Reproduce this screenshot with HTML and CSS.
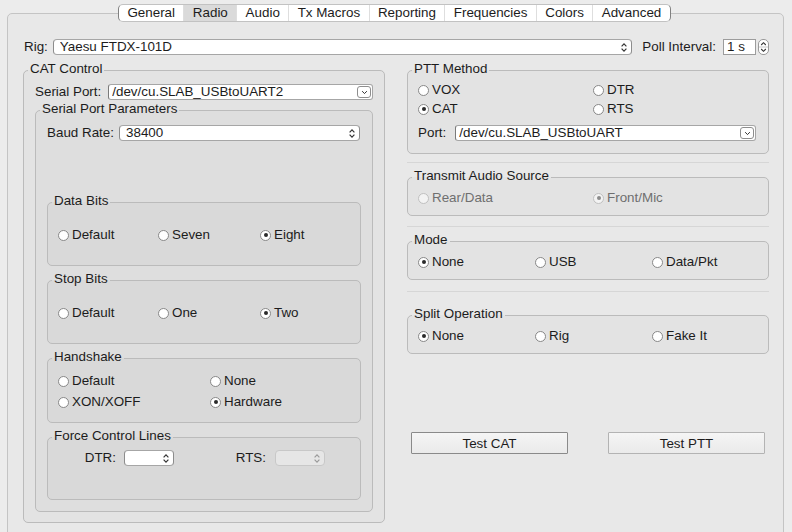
FILE: index.html
```html
<!DOCTYPE html>
<html>
<head>
<meta charset="utf-8">
<title>Radio settings</title>
<link rel="stylesheet" href="styles.css">
</head>
<body>
<div class="window">
  <div class="tabs-wrap">
    <div class="tabs">
      <span class="tab">General</span>
      <span class="tab sel">Radio</span>
      <span class="tab">Audio</span>
      <span class="tab">Tx Macros</span>
      <span class="tab">Reporting</span>
      <span class="tab">Frequencies</span>
      <span class="tab">Colors</span>
      <span class="tab">Advanced</span>
    </div>
  </div>
  <div class="pane">
    <div class="rig-row">
      <span class="rig-lbl">Rig:</span>
      <div class="popup grow"><span class="val">Yaesu FTDX-101D</span><svg class="ud" viewBox="0 0 8 11" width="8" height="11"><path d="M1.6 4.3 4 1.9 6.4 4.3M1.6 6.7 4 9.1 6.4 6.7" fill="none" stroke="#333" stroke-width="1.2"/></svg></div>
      <span class="poll-lbl">Poll Interval:</span>
      <div class="spin-field">1 s</div>
      <div class="stepper"><svg viewBox="0 0 9 14" width="9" height="14"><path d="M2.2 5 4.5 2.7 6.8 5M2.2 9 4.5 11.3 6.8 9" fill="none" stroke="#333" stroke-width="1.1"/><path d="M0 7H9" stroke="#c8c8c8" stroke-width="1"/></svg></div>
    </div>

    <div class="columns">
      <div class="col">
        <fieldset class="group lvl1 cat">
          <legend>CAT Control</legend>
          <div class="in cat-in">
            <div class="row">
              <span class="serial-lbl">Serial Port:</span>
              <div class="combo grow"><span class="val">/dev/cu.SLAB_USBtoUART2</span><span class="drop"><svg viewBox="0 0 8 6" width="7" height="5"><path d="M1.2 1.4 4 4.3 6.8 1.4" fill="none" stroke="#333" stroke-width="1.2"/></svg></span></div>
            </div>
            <fieldset class="group lvl2 spp">
              <legend>Serial Port Parameters</legend>
              <div class="in spp-in">
                <div class="row baud-row">
                  <span class="baud-lbl">Baud Rate:</span>
                  <div class="popup grow"><span class="val">38400</span><svg class="ud" viewBox="0 0 8 11" width="8" height="11"><path d="M1.6 4.3 4 1.9 6.4 4.3M1.6 6.7 4 9.1 6.4 6.7" fill="none" stroke="#333" stroke-width="1.2"/></svg></div>
                </div>
                <fieldset class="group lvl3 data-bits">
                  <legend>Data Bits</legend>
                  <div class="in bits-in">
                    <div class="radios r-bits">
                      <span class="radio"><span class="dot"></span>Default</span>
                      <span class="radio"><span class="dot"></span>Seven</span>
                      <span class="radio"><span class="dot on"></span>Eight</span>
                    </div>
                  </div>
                </fieldset>
                <fieldset class="group lvl3 stacked">
                  <legend>Stop Bits</legend>
                  <div class="in bits-in">
                    <div class="radios r-bits">
                      <span class="radio"><span class="dot"></span>Default</span>
                      <span class="radio"><span class="dot"></span>One</span>
                      <span class="radio"><span class="dot on"></span>Two</span>
                    </div>
                  </div>
                </fieldset>
                <fieldset class="group lvl3 stacked">
                  <legend>Handshake</legend>
                  <div class="in hs-in">
                    <div class="radios r-hs">
                      <span class="radio"><span class="dot"></span>Default</span>
                      <span class="radio"><span class="dot"></span>None</span>
                      <span class="radio"><span class="dot"></span>XON/XOFF</span>
                      <span class="radio"><span class="dot on"></span>Hardware</span>
                    </div>
                  </div>
                </fieldset>
                <fieldset class="group lvl3 stacked">
                  <legend>Force Control Lines</legend>
                  <div class="in fc-in">
                    <div class="fc-row">
                      <span class="fc-l1">DTR:</span>
                      <div class="popup small"><span class="val"></span><svg class="ud" viewBox="0 0 8 11" width="8" height="11"><path d="M1.6 4.3 4 1.9 6.4 4.3M1.6 6.7 4 9.1 6.4 6.7" fill="none" stroke="#333" stroke-width="1.2"/></svg></div>
                      <span class="fc-l2">RTS:</span>
                      <div class="popup small disabled"><span class="val"></span><svg class="ud" viewBox="0 0 8 11" width="8" height="11"><path d="M1.6 4.3 4 1.9 6.4 4.3M1.6 6.7 4 9.1 6.4 6.7" fill="none" stroke="#9a9a9a" stroke-width="1.2"/></svg></div>
                    </div>
                  </div>
                </fieldset>
              </div>
            </fieldset>
          </div>
        </fieldset>
      </div>

      <div class="col right">
        <fieldset class="group lvl1">
          <legend>PTT Method</legend>
          <div class="in ptt-in">
            <div class="radios r-two ptt-radios">
              <span class="radio"><span class="dot"></span>VOX</span>
              <span class="radio"><span class="dot"></span>DTR</span>
              <span class="radio"><span class="dot on"></span>CAT</span>
              <span class="radio"><span class="dot"></span>RTS</span>
            </div>
            <div class="row port-row">
              <span class="port-lbl">Port:</span>
              <div class="combo grow"><span class="val">/dev/cu.SLAB_USBtoUART</span><span class="drop"><svg viewBox="0 0 8 6" width="7" height="5"><path d="M1.2 1.4 4 4.3 6.8 1.4" fill="none" stroke="#333" stroke-width="1.2"/></svg></span></div>
            </div>
          </div>
        </fieldset>
        <div class="sep sep1"></div>
        <fieldset class="group lvl1 tx">
          <legend>Transmit Audio Source</legend>
          <div class="in single-in">
            <div class="radios r-two">
              <span class="radio dis"><span class="dot"></span>Rear/Data</span>
              <span class="radio dis"><span class="dot on"></span>Front/Mic</span>
            </div>
          </div>
        </fieldset>
        <div class="sep sep2"></div>
        <fieldset class="group lvl1 mode">
          <legend>Mode</legend>
          <div class="in single-in">
            <div class="radios r-three">
              <span class="radio"><span class="dot on"></span>None</span>
              <span class="radio"><span class="dot"></span>USB</span>
              <span class="radio"><span class="dot"></span>Data/Pkt</span>
            </div>
          </div>
        </fieldset>
        <div class="sep sep3"></div>
        <fieldset class="group lvl1 split">
          <legend>Split Operation</legend>
          <div class="in single-in">
            <div class="radios r-three">
              <span class="radio"><span class="dot on"></span>None</span>
              <span class="radio"><span class="dot"></span>Rig</span>
              <span class="radio"><span class="dot"></span>Fake It</span>
            </div>
          </div>
        </fieldset>
        <div class="buttons">
          <button class="btn default">Test CAT</button>
          <button class="btn">Test PTT</button>
        </div>
      </div>
    </div>
  </div>
</div>
</body>
</html>
```
FILE: styles.css
```css
* { box-sizing: border-box; }
html, body { margin: 0; padding: 0; }
body {
  width: 792px;
  height: 532px;
  overflow: hidden;
  background: #ececec;
  font-family: "Liberation Sans", Arial, sans-serif;
  font-size: 13.4px;
  line-height: 16px;
  color: #1c1c1c;
}
.window { padding-top: 4px; }

/* segmented tab control */
.tabs-wrap {
  display: flex;
  padding-left: 118px;
  position: relative;
  z-index: 1;
}
.tabs {
  display: flex;
  height: 18px;
  background: #fff;
  border: 1px solid #c2c2c2;
  border-left-color: #808080;
  border-right-color: #808080;
  border-radius: 5px;
  overflow: hidden;
}
.tab {
  padding: 0 8.4px;
  line-height: 16px;
  border-left: 1px solid #dedede;
  white-space: nowrap;
}
.tab:first-child { border-left: 0; }
.tab.sel { background: #dadada; }

/* tab pane */
.pane {
  margin: -9px 0 0 7px;
  width: 777px;
  height: 540px;
  border: 1px solid #c4c4c4;
  border-radius: 5px;
  background: #e8e8e8;
  padding: 24px 14px 0 15px;
}

.rig-row {
  display: flex;
  align-items: center;
  height: 18px;
  padding-left: 1px;
}
.rig-lbl { margin-right: 5px; }
.grow { flex: 1; min-width: 0; }
.poll-lbl { margin: 0 7px 0 10px; white-space: nowrap; }
.spin-field {
  width: 33px;
  height: 16px;
  background: #fff;
  border: 1px solid #9c9c9c;
  padding-left: 3px;
  line-height: 14px;
}
.stepper {
  margin-left: 2px;
  width: 11px;
  height: 16px;
  border: 1px solid #9a9a9a;
  border-radius: 5px;
  background: #fff;
  display: flex;
  align-items: center;
  justify-content: center;
  overflow: hidden;
}

/* popup buttons / combos */
.popup {
  display: flex;
  align-items: center;
  height: 16px;
  background: #fff;
  border: 1px solid #a6a6a6;
  border-left-color: #8c8c8c;
  border-right-color: #8c8c8c;
  border-radius: 4px;
  padding: 0 3px 0 6px;
  line-height: 14px;
}
.popup .val, .combo .val {
  flex: 1;
  white-space: nowrap;
  overflow: hidden;
}
.popup.small { width: 50px; }
.popup.disabled {
  background: #e6e6e6;
  border-color: #c8c8c8;
}
.ud { flex: none; }
.combo {
  display: flex;
  align-items: center;
  height: 16px;
  background: #fff;
  border: 1px solid #a6a6a6;
  border-left-color: #7a7a7a;
  border-radius: 3px;
  padding: 0 1px 0 3px;
  line-height: 14px;
}
.combo .drop {
  flex: none;
  width: 14px;
  height: 12px;
  border: 1px solid #8e8e8e;
  border-radius: 3px;
  display: flex;
  align-items: center;
  justify-content: center;
  background: #fff;
}

/* columns */
.columns {
  display: flex;
  gap: 22px;
  margin-top: 5px;
}
.col { width: 362px; flex: none; }

/* group boxes */
.group {
  margin: 0;
  min-width: 0;
  padding: 0;
  border: 1px solid #bbbbbb;
  border-radius: 5px;
}
.group > legend {
  margin-left: 4px;
  padding: 0 2px 2px;
  line-height: 16px;
}
.lvl1 { background: #e3e3e3; }
.lvl2 { background: #dedede; }
.lvl3 { background: #d9d9d9; }

.row {
  display: flex;
  align-items: center;
  height: 18px;
}
.cat-in { padding: 4px 11px 10px; }
.serial-lbl { margin-right: 7px; white-space: nowrap; }
.spp-in { padding: 5px 11px 11px; }
.baud-lbl { margin-right: 5px; white-space: nowrap; }
.baud-row .popup { margin-right: 1px; }
.data-bits { margin-top: 51px; }
.stacked { margin-top: 5px; }
.bits-in { padding: 16px 10px 22px; }
.hs-in { padding: 6px 10px 12px; }
.fc-in { padding: 4px 10px 33px; }

.fc-row {
  display: flex;
  align-items: center;
  height: 16px;
}
.fc-l1 { width: 58px; text-align: right; margin-right: 8px; }
.fc-l2 { width: 92px; text-align: right; margin-right: 9px; }

/* radios */
.radios { display: grid; }
.r-bits { grid-template-columns: 100px 102px 1fr; }
.r-hs { grid-template-columns: 152px 1fr; row-gap: 5px; }
.r-two { grid-template-columns: 175px 1fr; }
.r-three { grid-template-columns: 117px 117px 1fr; }
.ptt-radios { row-gap: 3px; }
.radio {
  display: flex;
  align-items: center;
  height: 16px;
  gap: 3px;
  white-space: nowrap;
}
.dot {
  position: relative;
  flex: none;
  width: 11px;
  height: 11px;
  border: 1px solid #888888;
  border-radius: 50%;
  background: #fff;
}
.dot.on::after {
  content: "";
  position: absolute;
  left: 2.5px;
  top: 2.5px;
  width: 4px;
  height: 4px;
  border-radius: 50%;
  background: #2a2a2a;
}
.radio.dis { color: #6f6f6f; }
.radio.dis .dot { border-color: #c0c0c0; background: #f3f3f3; }
.radio.dis .dot.on::after { background: #8c8c8c; }

/* right column */
.ptt-in { padding: 3px 12px 11px 10px; }
.port-row { margin-top: 7px; }
.port-lbl { margin-right: 9px; }
.sep { height: 1px; background: #d6d6d6; }
.sep1 { margin-top: 8px; }
.tx { margin-top: 5px; }
.sep2 { margin-top: 10px; }
.mode { margin-top: 5px; }
.sep3 { margin-top: 11px; }
.split { margin-top: 14px; }
.single-in { padding: 4px 10px 9px; }

.buttons {
  display: flex;
  justify-content: space-between;
  margin-top: 78px;
  padding: 0 4px;
}
.btn {
  width: 157px;
  height: 22px;
  margin: 0;
  padding: 0;
  font-family: inherit;
  font-size: 13.4px;
  color: #1c1c1c;
  border: 1px solid #b3b3b3;
  border-radius: 1px;
  background: linear-gradient(#f5f5f5, #eaeaea);
}
.btn.default { border-color: #8a8a8a; }
```
